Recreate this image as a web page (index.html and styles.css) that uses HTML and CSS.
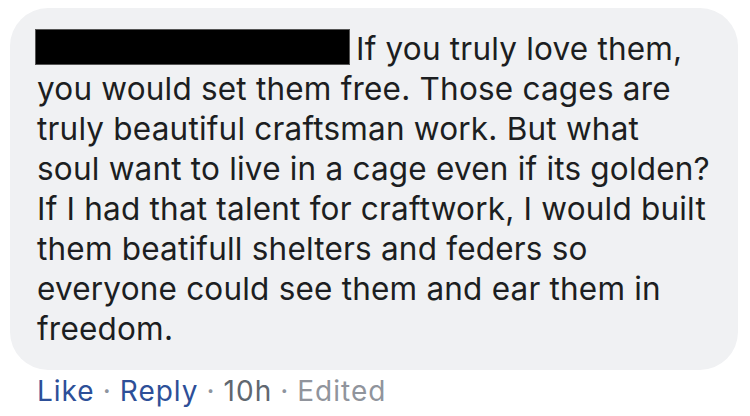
FILE: index.html
```html
<!DOCTYPE html>
<html>
<head>
<meta charset="utf-8">
<link rel="stylesheet" href="styles.css">
</head>
<body>
<div class="comment">
  <div class="bubble">
    <p class="text"><span class="redact"></span>If you truly love them,<br>
you would set them free. Those cages are<br>
truly beautiful craftsman work. But what<br>
soul want to live in a cage even if its golden?<br>
If I had that talent for craftwork, I would built<br>
them beatifull shelters and feders so<br>
everyone could see them and ear them in<br>
freedom.</p>
  </div>
  <div class="actions">
    <span class="link">Like</span><span class="dot">·</span><span class="link">Reply</span><span class="dot">·</span><span class="time">10h</span><span class="dot">·</span><span class="edited">Edited</span>
  </div>
</div>
</body>
</html>
```

FILE: styles.css
```css
html, body {
  margin: 0;
  padding: 0;
  background: #ffffff;
}
body {
  font-family: Inter, "Liberation Sans", sans-serif;
  width: 750px;
  height: 416px;
  overflow: hidden;
}
.comment {
  padding: 8px 12px 0 10px;
}
.bubble {
  background: #f0f1f3;
  border-radius: 38px;
  padding: 21px 20px 21px 27px;
}
.text {
  margin: 0;
  font-size: 31.5px;
  line-height: 40px;
  letter-spacing: 0.2px;
  color: #1c1e21;
  white-space: nowrap;
}
.redact {
  display: inline-block;
  width: 313px;
  height: 34px;
  background: #000;
  border: 1px solid #555;
  vertical-align: -5px;
  margin: 0 6px 0 -2px;
}
.actions {
  margin-top: 5px;
  padding-left: 27px;
  font-size: 28px;
  line-height: 32px;
  letter-spacing: 1px;
  white-space: nowrap;
}
.link {
  color: #2d4f98;
}
.dot {
  color: #8d949e;
  margin: 0 8px;
}
.time {
  color: #606770;
}
.edited {
  color: #90949c;
}
```
